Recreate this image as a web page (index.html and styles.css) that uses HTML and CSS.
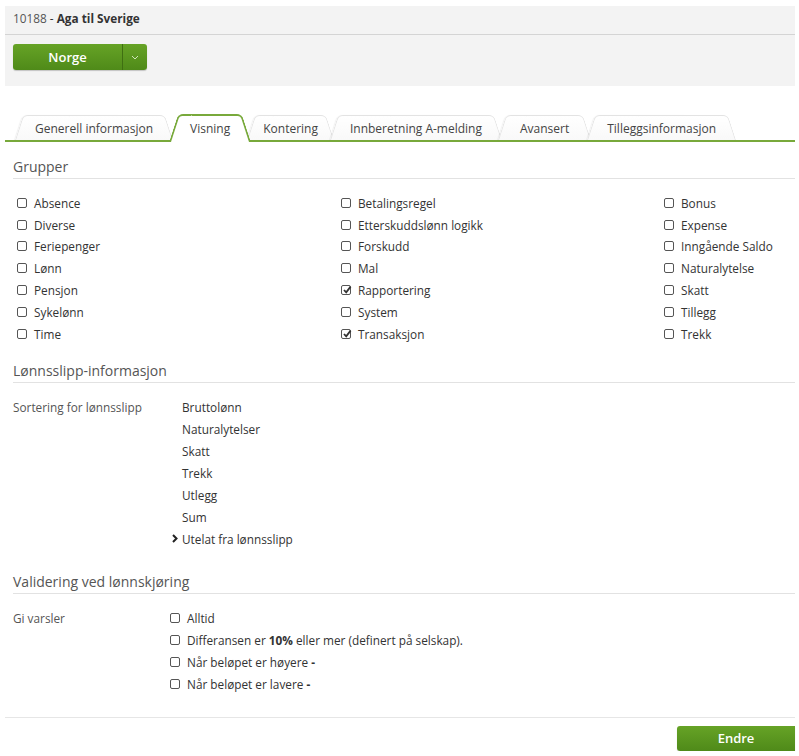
FILE: index.html
```html
<!DOCTYPE html>
<html lang="no">
<head>
  <meta charset="UTF-8">
  <title>Aga til Sverige</title>
  <link rel="stylesheet" href="styles.css">
</head>
<body>
  <div class="page">
    <div class="header">
      <div class="header-title"><span class="code">10188</span> - <b>Aga til Sverige</b></div>
      <div class="header-actions">
        <div class="split-btn">
          <button class="btn-main">Norge</button>
          <button class="btn-drop">
            <svg width="8" height="5" viewBox="0 0 8 5"><path d="M1 1l3 3 3-3" fill="none" stroke="#cfe3b8" stroke-width="1"/></svg>
          </button>
        </div>
      </div>
    </div>

    <div class="tabs">
      <div class="tab">Generell informasjon</div>
      <div class="tab active">Visning</div>
      <div class="tab">Kontering</div>
      <div class="tab">Innberetning A-melding</div>
      <div class="tab">Avansert</div>
      <div class="tab">Tilleggsinformasjon</div>
    </div>

    <div class="content">
      <h2 class="section-title">Grupper</h2>
      <div class="groups">
        <div class="col">
          <label class="check"><span class="cb"></span>Absence</label>
          <label class="check"><span class="cb"></span>Diverse</label>
          <label class="check"><span class="cb"></span>Feriepenger</label>
          <label class="check"><span class="cb"></span>Lønn</label>
          <label class="check"><span class="cb"></span>Pensjon</label>
          <label class="check"><span class="cb"></span>Sykelønn</label>
          <label class="check"><span class="cb"></span>Time</label>
        </div>
        <div class="col">
          <label class="check"><span class="cb"></span>Betalingsregel</label>
          <label class="check"><span class="cb"></span>Etterskuddslønn logikk</label>
          <label class="check"><span class="cb"></span>Forskudd</label>
          <label class="check"><span class="cb"></span>Mal</label>
          <label class="check"><span class="cb checked"><svg viewBox="0 0 10 10"><path d="M2 5l2.2 2.4L8.6 1.6" fill="none" stroke="#333" stroke-width="1.8"/></svg></span>Rapportering</label>
          <label class="check"><span class="cb"></span>System</label>
          <label class="check"><span class="cb checked"><svg viewBox="0 0 10 10"><path d="M2 5l2.2 2.4L8.6 1.6" fill="none" stroke="#333" stroke-width="1.8"/></svg></span>Transaksjon</label>
        </div>
        <div class="col">
          <label class="check"><span class="cb"></span>Bonus</label>
          <label class="check"><span class="cb"></span>Expense</label>
          <label class="check"><span class="cb"></span>Inngående Saldo</label>
          <label class="check"><span class="cb"></span>Naturalytelse</label>
          <label class="check"><span class="cb"></span>Skatt</label>
          <label class="check"><span class="cb"></span>Tillegg</label>
          <label class="check"><span class="cb"></span>Trekk</label>
        </div>
      </div>

      <h2 class="section-title spaced">Lønnsslipp-informasjon</h2>
      <div class="field-row sort-row">
        <div class="field-label">Sortering for lønnsslipp</div>
        <ul class="sort-list">
          <li>Bruttolønn</li>
          <li>Naturalytelser</li>
          <li>Skatt</li>
          <li>Trekk</li>
          <li>Utlegg</li>
          <li>Sum</li>
          <li class="excluded">
            <svg class="chevron" width="6" height="9" viewBox="0 0 6 9"><path d="M1 1l3.5 3.5L1 8" fill="none" stroke="#222" stroke-width="2"/></svg>
            Utelat fra lønnsslipp
          </li>
        </ul>
      </div>

      <h2 class="section-title spaced-lg">Validering ved lønnskjøring</h2>
      <div class="field-row warn-row">
        <div class="field-label">Gi varsler</div>
        <div class="warn-list">
          <label class="check"><span class="cb"></span>Alltid</label>
          <label class="check"><span class="cb"></span>Differansen er&nbsp;<b>10%</b>&nbsp;eller mer (definert på selskap).</label>
          <label class="check"><span class="cb"></span>Når beløpet er høyere&nbsp;<b>-</b></label>
          <label class="check"><span class="cb"></span>Når beløpet er lavere&nbsp;<b>-</b></label>
        </div>
      </div>
    </div>

    <div class="footer">
      <button class="btn-green">Endre</button>
    </div>
  </div>
</body>
</html>
```

FILE: styles.css
```css
body {
  margin: 0;
  font-family: 'Open Sans', 'Noto Sans', sans-serif;
  font-size: 11.8px;
  color: #333;
  background: #fff;
}

.page {
  padding: 6px 4px 0 5px;
}

/* header panel */
.header {
  background-color: #f3f3f3;
}

.header-title {
  height: 28px;
  line-height: 24px;
  padding: 0 8px;
  border-bottom: 1px solid #d4d4d4;
  color: #333;
}

.header-title .code {
  color: #555;
}

.header-actions {
  padding: 9px 8px 16px;
}

.split-btn {
  display: flex;
  width: 134px;
  height: 26px;
  border-radius: 3px;
  overflow: hidden;
  box-shadow: 0 1px 1px rgba(0, 0, 0, 0.2);
}

.split-btn button {
  border: none;
  color: #fff;
  font-family: inherit;
  background: linear-gradient(#66a326, #4f8a19);
  cursor: pointer;
}

.btn-main {
  width: 110px;
  font-size: 13px;
  font-weight: 600;
  border-right: 1px solid #3f6f12 !important;
}

.btn-drop {
  flex: 1;
  padding: 0;
  display: flex;
  align-items: center;
  justify-content: center;
}

/* tabs */
.tabs {
  display: flex;
  margin-top: 29px;
  padding-left: 10px;
  border-bottom: 2px solid #78a93b;
}

.tab {
  position: relative;
  z-index: 1;
  height: 25px;
  line-height: 28px;
  padding: 0 20px;
  margin-right: -4px;
  font-size: 12px;
  color: #444;
  white-space: nowrap;
}

.tab::before,
.tab::after {
  content: '';
  position: absolute;
  top: 0;
  bottom: 0;
  width: 60%;
  z-index: -1;
  background: linear-gradient(#fff, #f9f9f9);
  border: 1px solid #e3e3e3;
  border-bottom: none;
}

.tab::before {
  left: 0;
  border-right: none;
  border-radius: 5px 0 0 0;
  transform: skewX(-18deg);
  transform-origin: bottom left;
  box-shadow: -1px 0 1px rgba(0, 0, 0, 0.06);
}

.tab::after {
  right: 0;
  border-left: none;
  border-radius: 0 5px 0 0;
  transform: skewX(18deg);
  transform-origin: bottom right;
}

.tab.active {
  z-index: 5;
  padding: 0 21px;
}

.tab.active::before,
.tab.active::after {
  top: -1px;
  bottom: -2px;
  background: #fff;
  border-color: #78a93b;
  border-width: 2px;
  box-shadow: none;
}

.tab:nth-child(3) {
  padding: 0 16px;
}

.tab:nth-child(5) {
  padding: 0 22px;
}

/* content */
.content {
  padding: 0 0 0 8px;
}

.section-title {
  margin: 15px 0 0;
  padding-bottom: 1px;
  font-size: 14px;
  font-weight: 400;
  line-height: 20px;
  color: #555;
  border-bottom: 1px solid #e2e2e2;
}

.section-title.spaced {
  margin-top: 16px;
}

.section-title.spaced-lg {
  margin-top: 22px;
}

.groups {
  display: grid;
  grid-template-columns: 324px 323px auto;
  padding: 13px 0 0 4px;
}

.check {
  display: flex;
  align-items: center;
  height: 21.8px;
  color: #333;
  white-space: nowrap;
}

.check b {
  font-weight: 700;
}

.cb {
  width: 8px;
  height: 8px;
  border: 1px solid #555;
  border-radius: 2px;
  margin-right: 7px;
  position: relative;
  flex-shrink: 0;
}

.cb svg {
  position: absolute;
  left: 0;
  top: -1px;
  width: 10px;
  height: 10px;
}

.field-row {
  display: flex;
}

.field-label {
  width: 157px;
  flex-shrink: 0;
  color: #555;
  line-height: 22px;
}

.sort-row {
  margin-top: 13px;
}

.sort-list {
  list-style: none;
  margin: 0;
  padding: 0 0 0 12px;
}

.sort-list li {
  position: relative;
  line-height: 22px;
}

.chevron {
  position: absolute;
  left: -10px;
  top: 6px;
}

.warn-row {
  margin-top: 13px;
}

.warn-list .check {
  height: 22px;
}

/* footer */
.footer {
  margin-top: 22px;
  border-top: 1px solid #e6e6e6;
  padding-top: 8px;
  display: flex;
  justify-content: flex-end;
}

.btn-green {
  width: 118px;
  height: 25px;
  border: none;
  border-radius: 3px 0 0 3px;
  color: #fff;
  font-family: inherit;
  font-size: 13px;
  font-weight: 600;
  background: linear-gradient(#66a326, #4f8a19);
  box-shadow: 0 1px 1px rgba(0, 0, 0, 0.2);
  cursor: pointer;
}
```
